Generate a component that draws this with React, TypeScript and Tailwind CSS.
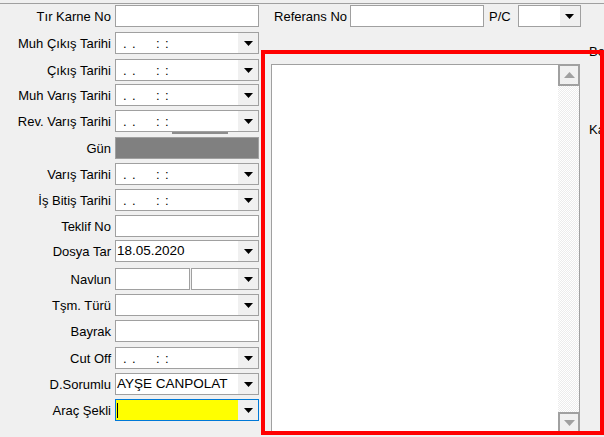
import React from "react";

const Arrow = () => (
  <div className="w-[20px] h-[20px] bg-[#f0f0f0] flex items-center justify-center shrink-0">
    <svg width="9" height="5" viewBox="0 0 9 5">
      <polygon points="0,0 9,0 4.5,5" fill="#000" />
    </svg>
  </div>
);

const DateText = () => (
  <div className="flex-1 flex items-center text-[13px] leading-none">
    <span className="ml-[7px] w-[9px]">.</span>
    <span className="w-[24px]">.</span>
    <span className="w-[9px]">:</span>
    <span>:</span>
  </div>
);

type Row = {
  label: string;
  mt: string;
  kind: "text" | "date" | "gray" | "combo" | "value" | "navlun" | "yellow";
  value?: string;
  bar?: boolean;
};

const rows: Row[] = [
  { label: "Tır Karne No", mt: "mt-[1px]", kind: "text" },
  { label: "Muh Çıkış Tarihi", mt: "mt-[5px]", kind: "date" },
  { label: "Çıkış Tarihi", mt: "mt-[5px]", kind: "date" },
  { label: "Muh Varış Tarihi", mt: "mt-[3px]", kind: "date" },
  { label: "Rev. Varış Tarihi", mt: "mt-[4px]", kind: "date", bar: true },
  { label: "Gün", mt: "mt-[5px]", kind: "gray" },
  { label: "Varış Tarihi", mt: "mt-[4px]", kind: "date" },
  { label: "İş Bitiş Tarihi", mt: "mt-[4px]", kind: "date" },
  { label: "Teklif No", mt: "mt-[4px]", kind: "text" },
  { label: "Dosya Tar", mt: "mt-[3px]", kind: "value", value: "18.05.2020" },
  { label: "Navlun", mt: "mt-[6px]", kind: "navlun" },
  { label: "Tşm. Türü", mt: "mt-[4px]", kind: "combo" },
  { label: "Bayrak", mt: "mt-[4px]", kind: "text" },
  { label: "Cut Off", mt: "mt-[5px]", kind: "date" },
  { label: "D.Sorumlu", mt: "mt-[4px]", kind: "value", value: "AYŞE CANPOLAT" },
  { label: "Araç Şekli", mt: "mt-[4px]", kind: "yellow" },
];

function Field({ row }: { row: Row }) {
  const base = "h-[22px] w-[144px] border border-[#a0a0a0] flex items-center";
  switch (row.kind) {
    case "text":
      return <div className={`${base} bg-white`} />;
    case "gray":
      return <div className={`${base} bg-[#808080]`} />;
    case "date":
      return (
        <div className={`${base} bg-white`}>
          <DateText />
          <Arrow />
        </div>
      );
    case "combo":
      return (
        <div className={`${base} bg-white`}>
          <div className="flex-1" />
          <Arrow />
        </div>
      );
    case "value":
      return (
        <div className={`${base} bg-white`}>
          <div className="flex-1 pl-[1px] text-[13.5px] leading-none whitespace-nowrap overflow-hidden">
            {row.value}
          </div>
          <Arrow />
        </div>
      );
    case "yellow":
      return (
        <div className="h-[22px] w-[144px] border border-[#0078d7] bg-[#ffff00] flex items-center">
          <div className="flex-1 flex items-center pl-[1px]">
            <div className="w-[1px] h-[15px] bg-black" />
          </div>
          <Arrow />
        </div>
      );
    case "navlun":
      return (
        <div className="flex w-[144px] gap-[1px]">
          <div className="h-[22px] w-[75px] border border-[#a0a0a0] bg-white" />
          <div className="h-[22px] w-[68px] border border-[#a0a0a0] bg-white flex items-center">
            <div className="flex-1" />
            <Arrow />
          </div>
        </div>
      );
  }
}

export default function App() {
  return (
    <div
      className="relative w-[604px] h-[437px] overflow-hidden bg-[#f0f0f0] text-black"
      style={{ fontFamily: '"Liberation Sans", Arial, sans-serif' }}
    >
      <div className="pt-[3px]">
        <div className="border-t border-[#a0a0a0] flex">
          {/* left column */}
          <div className="w-[260px] flex flex-col">
            {rows.map((r, i) => (
              <div key={i} className={`${r.mt} relative flex items-center h-[22px]`}>
                <div className="w-[111px] text-right text-[13px] leading-none whitespace-nowrap">
                  {r.label}
                </div>
                <div className="ml-[4px]">
                  <Field row={r} />
                </div>
                {r.bar && (
                  <div className="absolute left-[172px] top-[22px] w-[56px] h-[2px] bg-[#8c8c8c]" />
                )}
              </div>
            ))}
          </div>

          {/* middle column */}
          <div className="w-[329px] flex flex-col">
            <div className="mt-[1px] flex items-center h-[22px]">
              <div className="w-[87px] text-right text-[13px] leading-none whitespace-nowrap">
                Referans No
              </div>
              <div className="ml-[3px] h-[22px] w-[134px] border border-[#a0a0a0] bg-white" />
              <div className="ml-[5px] text-[13px] leading-none">P/C</div>
              <div className="ml-[7px] h-[22px] w-[63px] border border-[#a0a0a0] bg-white flex items-center">
                <div className="flex-1" />
                <Arrow />
              </div>
            </div>
            <div className="mt-[37px] ml-[11px] w-[309px] h-[370px] border border-[#a0a0a0] bg-white flex">
              <div className="flex-1" />
              <div className="w-[22px] -my-[1px] -mr-[1px] flex flex-col">
                <div className="h-[22px] border-2 border-[#a0a0a0] bg-[#f0f0f0] flex items-center justify-center">
                  <svg width="11" height="6" viewBox="0 0 11 6">
                    <polygon points="0,6 11,6 5.5,0" fill="#a0a0a0" />
                  </svg>
                </div>
                <div className="flex-1 border-r border-[#a0a0a0] bg-[repeating-conic-gradient(#ececec_0_25%,#ffffff_0_50%)] bg-[length:2px_2px]" />
                <div className="h-[22px] border-2 border-[#a0a0a0] bg-[#f0f0f0] flex items-center justify-center">
                  <svg width="11" height="6" viewBox="0 0 11 6">
                    <polygon points="0,0 11,0 5.5,6" fill="#a0a0a0" />
                  </svg>
                </div>
              </div>
            </div>
          </div>

          {/* right column (clipped) */}
          <div className="flex-1 flex flex-col text-[13px] leading-none whitespace-nowrap overflow-hidden">
            <div className="mt-[41px]">Be</div>
            <div className="mt-[65px]">Ka</div>
          </div>
        </div>
      </div>

      {/* red highlight overlay */}
      <div className="pointer-events-none absolute left-[261px] top-[50px] w-[343px] h-[385px] border-4 border-[#ff0000]" />
    </div>
  );
}
